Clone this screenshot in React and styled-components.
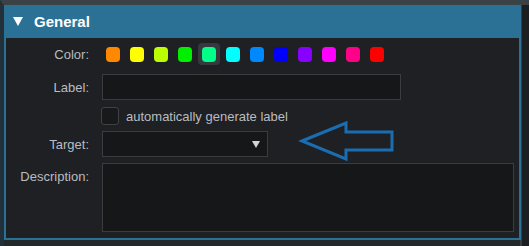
import styled, { createGlobalStyle } from "styled-components";

const GlobalStyle = createGlobalStyle`
  html, body {
    margin: 0;
    padding: 0;
    background: #1d2124;
  }
  body {
    font-family: "Liberation Sans", Arial, sans-serif;
  }
`;

const Page = styled.div`
  width: 529px;
  height: 246px;
  box-sizing: border-box;
  background: #23282b;
  border-top: 5px solid #3a4246;
  border-left: 4px solid #22303a;
  padding: 0 8px 6px 0;
  box-shadow: inset -7px 0 0 #1c1f22, inset -9px 0 0 #393e43;
`;

const Panel = styled.div`
  position: relative;
  width: 517px;
  height: 235px;
  box-sizing: border-box;
  border: 2px solid #2a7196;
  border-top: none;
  background: #1e2023;
  display: flex;
  flex-direction: column;
`;

const Header = styled.div`
  height: 33px;
  background: #2b7196;
  margin: 0 -2px;
  display: flex;
  align-items: center;
  padding-left: 9px;
  gap: 11px;
  color: #ffffff;
  font-weight: bold;
  font-size: 15px;
`;

const Body = styled.div`
  display: flex;
  flex-direction: column;
  padding-top: 5px;
`;

const Row = styled.div`
  display: flex;
  align-items: ${(p) => (p.$top ? "flex-start" : "center")};
  margin-top: ${(p) => p.$mt || 0}px;
  height: ${(p) => p.$h}px;
`;

const Label = styled.div`
  width: 83px;
  margin-right: 13px;
  text-align: right;
  color: #b9bdc1;
  font-size: 13px;
  padding-top: ${(p) => (p.$top ? "6px" : "0")};
`;

const Swatches = styled.div`
  display: flex;
  gap: 2px;
`;

const SwatchCell = styled.div`
  width: 22px;
  height: 22px;
  border-radius: 4px;
  background: ${(p) => (p.$selected ? "#35393d" : "transparent")};
  display: flex;
  align-items: center;
  justify-content: center;
`;

const Swatch = styled.div`
  width: 14px;
  height: 15px;
  border-radius: 4px;
  background: ${(p) => p.$color};
`;

const Input = styled.div`
  width: ${(p) => p.$w}px;
  height: ${(p) => p.$h}px;
  box-sizing: border-box;
  background: #161719;
  border: 1px solid #3a3d40;
  position: relative;
  display: flex;
  align-items: center;
  justify-content: flex-end;
  padding-right: 7px;
`;

const Checkbox = styled.div`
  width: 18px;
  height: 18px;
  box-sizing: border-box;
  border: 1px solid #3e4245;
  border-radius: 3px;
  background: #18191b;
  margin-left: -1px;
  margin-right: 7px;
`;

const CheckText = styled.span`
  color: #b9bdc1;
  font-size: 13px;
`;

const Arrow = styled.svg`
  position: absolute;
  left: 290px;
  top: 114px;
`;

const colors = [
  "#ff8800",
  "#ffff00",
  "#bbff00",
  "#00ee00",
  "#00ff88",
  "#00ffff",
  "#0088ff",
  "#0000ff",
  "#8800ff",
  "#ff00ff",
  "#ff0088",
  "#ff0000",
];

export default function App() {
  return (
    <>
      <GlobalStyle />
      <Page>
        <Panel>
          <Header>
            <svg width="10" height="9" viewBox="0 0 10 9">
              <polygon points="0,0 10,0 5,9" fill="#ffffff" />
            </svg>
            General
          </Header>
          <Body>
            <Row $h={22}>
              <Label>Color:</Label>
              <Swatches>
                {colors.map((c, i) => (
                  <SwatchCell key={c} $selected={i === 4}>
                    <Swatch $color={c} />
                  </SwatchCell>
                ))}
              </Swatches>
            </Row>
            <Row $h={26} $mt={9}>
              <Label>Label:</Label>
              <Input $w={299} $h={26} />
            </Row>
            <Row $h={18} $mt={7}>
              <Label />
              <Checkbox />
              <CheckText>automatically generate label</CheckText>
            </Row>
            <Row $h={26} $mt={6}>
              <Label>Target:</Label>
              <Input $w={166} $h={26}>
                <svg width="8" height="7" viewBox="0 0 8 7">
                  <polygon points="0,0 8,0 4,7" fill="#d4d4d4" />
                </svg>
              </Input>
            </Row>
            <Row $h={69} $mt={6} $top>
              <Label $top>Description:</Label>
              <Input $w={412} $h={69} />
            </Row>
          </Body>
          <Arrow width="104" height="48" viewBox="0 0 104 48">
            <polygon
              points="6,22 50,4 50,13 96,13 96,31 50,31 50,40"
              fill="none"
              stroke="#1b6db2"
              strokeWidth="3"
            />
          </Arrow>
        </Panel>
      </Page>
    </>
  );
}
